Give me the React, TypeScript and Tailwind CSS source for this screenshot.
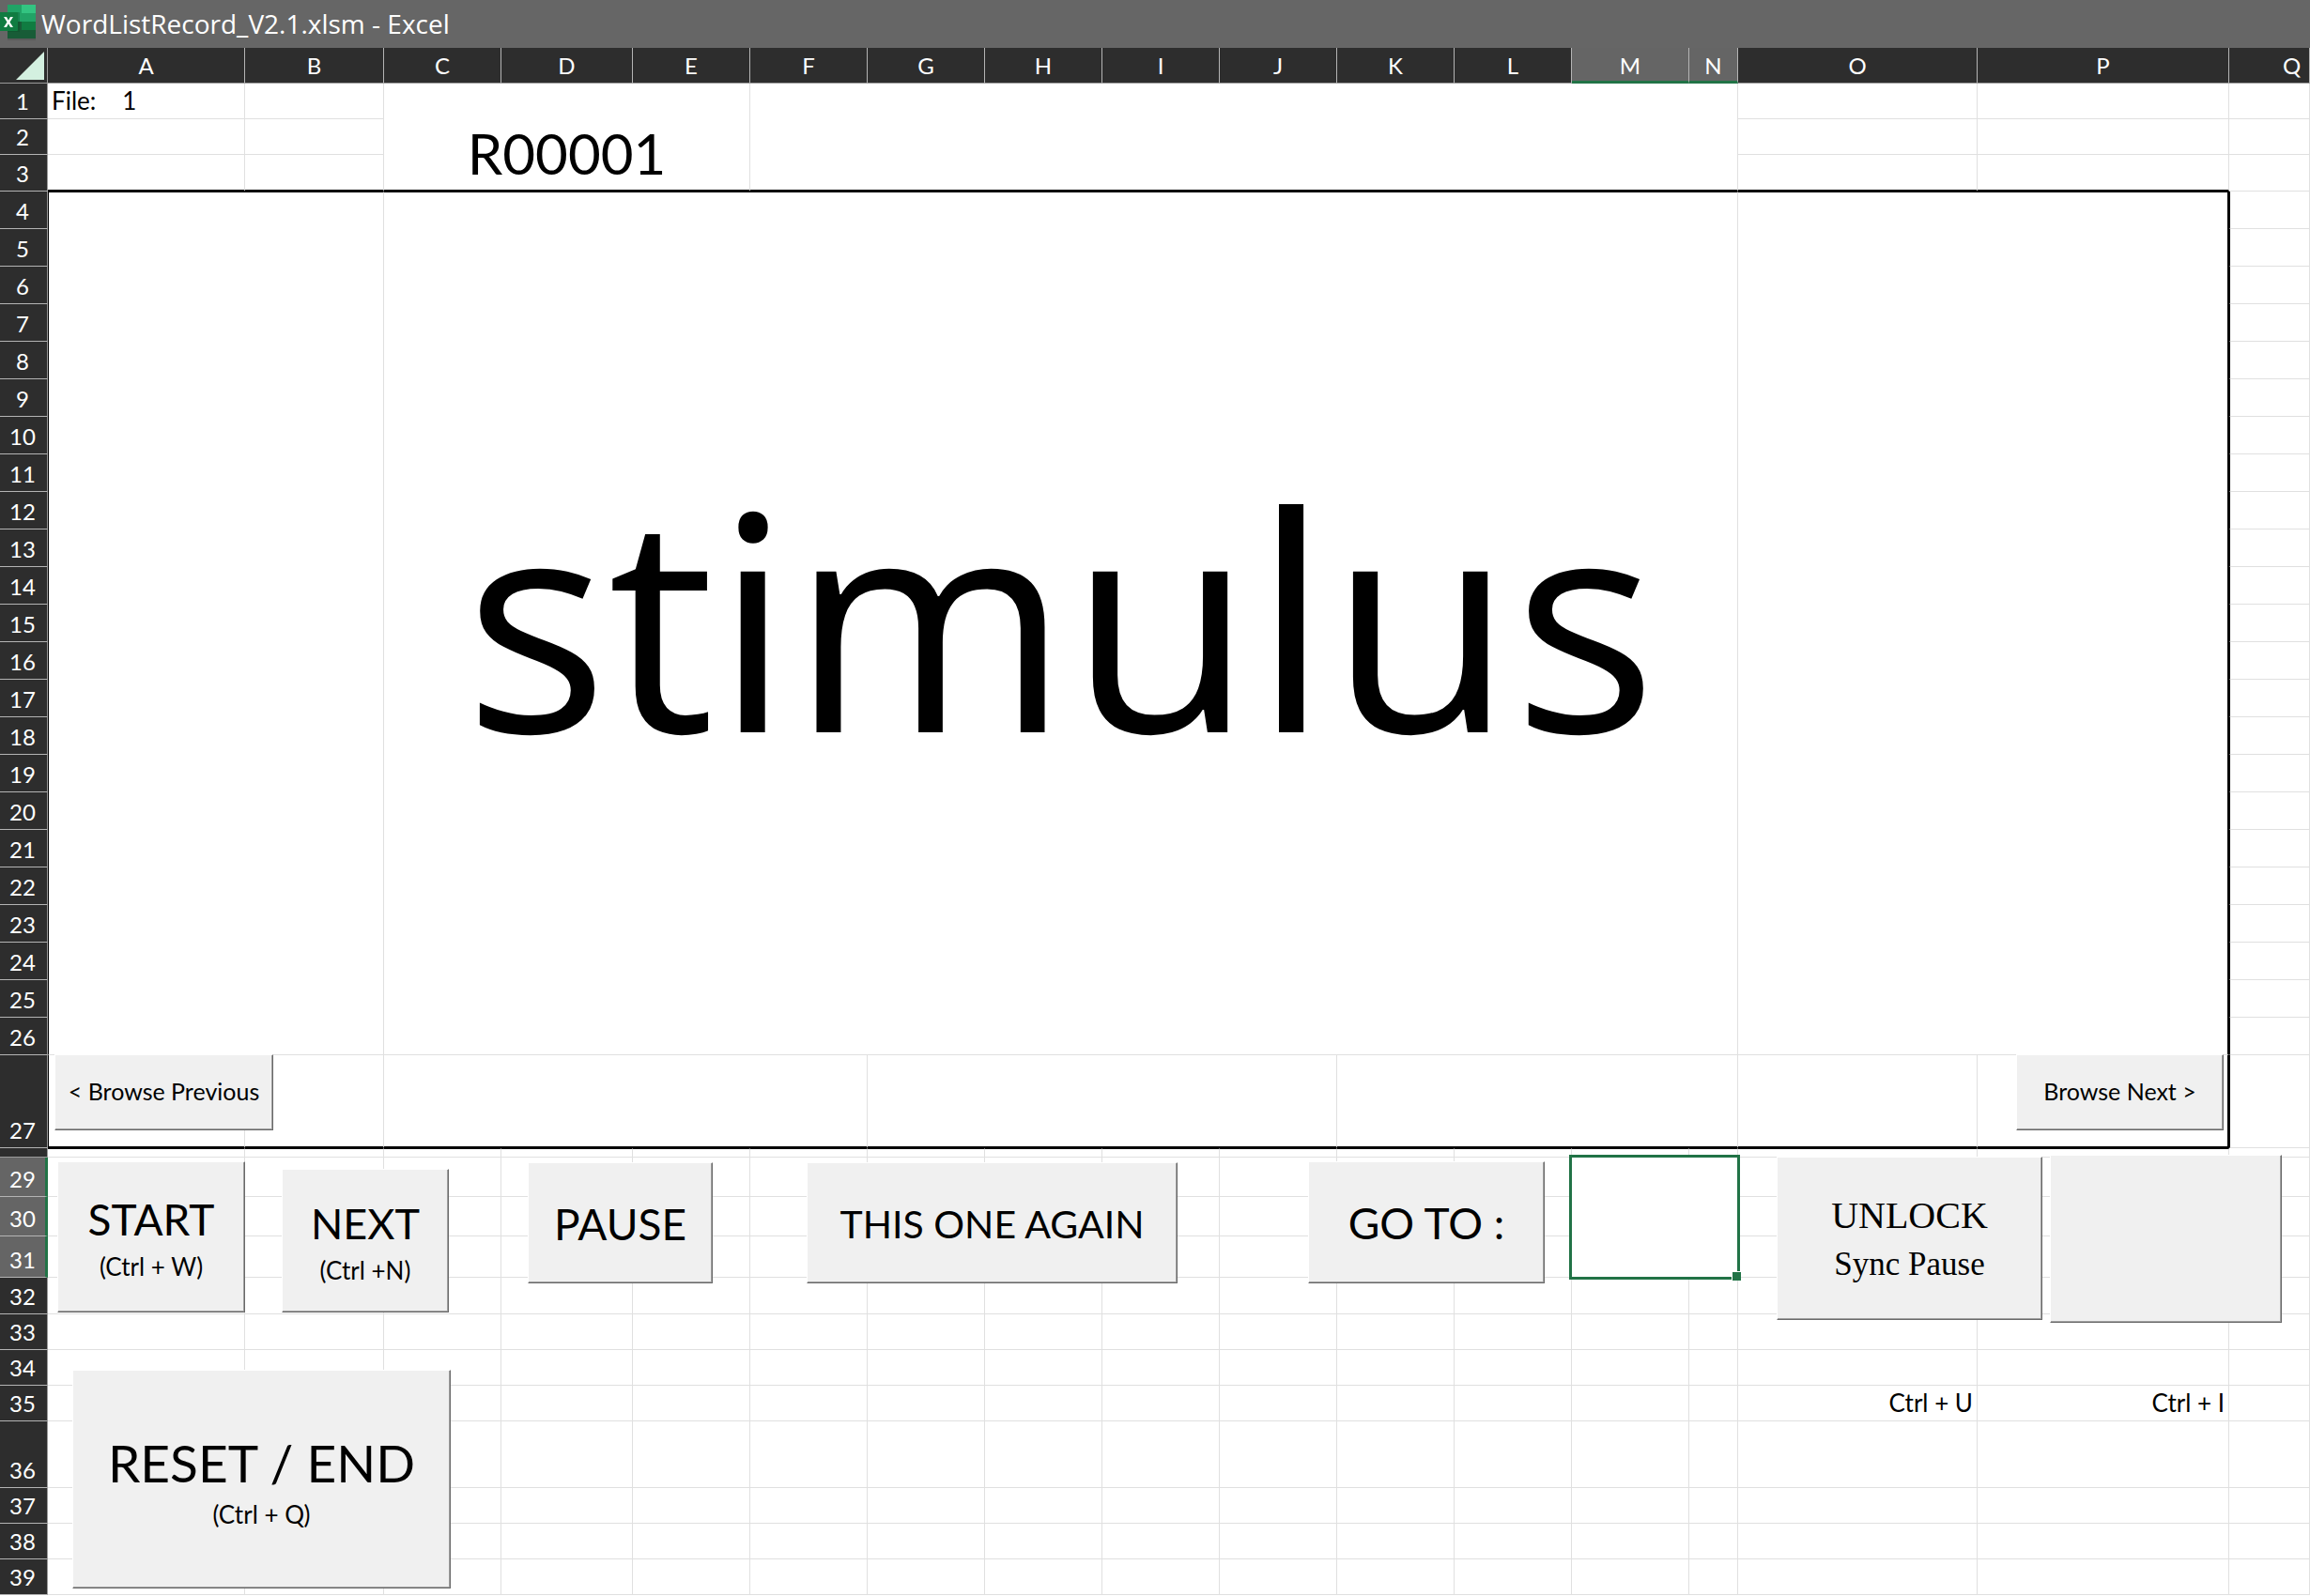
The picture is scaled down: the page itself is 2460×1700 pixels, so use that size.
import type { ReactNode } from "react";

const CELL = "border-r border-b border-[#e0e0e0] p-0";
const FRAME_BOTTOM = "border-r border-b-2 border-r-[#e0e0e0] border-b-black p-0";
const FRAME_SIDE = "border-r border-b border-l border-[#e0e0e0] border-l-black p-0";
const DARK = "bg-[#2d2d2d]";
const LIT = "bg-[#656565]";
const LETTERS = "ABCDEFGHIJKLMNOPQ".split("");

function SheetCells({ count }: { count: number }) {
  return (
    <>
      {Array.from({ length: count }, (_, i) => (
        <td key={i} className={CELL} />
      ))}
    </>
  );
}

function RowHead({ n, lit }: { n: number; lit?: boolean }) {
  return (
    <th
      scope="row"
      className={`border-b border-b-[#b4b4b4] p-0 text-center align-bottom font-normal leading-9 text-white ${
        lit ? `${LIT} border-r-3 border-r-[#217346]` : `${DARK} border-r border-r-[#9a9a9a] pr-0.5`
      }`}
    >
      {n}
    </th>
  );
}

function PushButton({ className, children, label }: { className: string; children?: ReactNode; label?: string }) {
  return (
    <button
      type="button"
      aria-label={label}
      className={`absolute flex flex-col items-center justify-center border border-t-white border-r-[#696969] border-b-[#696969] border-l-white bg-[#f0f0f0] whitespace-nowrap text-black shadow-[inset_-1px_-1px_0_#a0a0a0] ${className}`}
    >
      {children}
    </button>
  );
}

function ExcelLogo() {
  return (
    <svg viewBox="0 0 40 44" className="h-11 w-10 shrink-0" aria-hidden="true">
      <rect x="8" y="6" width="30" height="37" fill="#4f4f4f" opacity=".5" />
      <rect x="8" y="5" width="15" height="18" fill="#21a366" />
      <rect x="23" y="5" width="15" height="9" fill="#33c481" />
      <rect x="23" y="14" width="15" height="9" fill="#21a366" />
      <rect x="8" y="23" width="15" height="9" fill="#185c37" />
      <rect x="23" y="23" width="15" height="9" fill="#107c41" />
      <rect x="8" y="32" width="30" height="9" fill="#185c37" />
      <path d="M8 13h12a1 1 0 0 1 1 1v20H8z" fill="#0b4a27" opacity=".35" />
      <path d="M0 13h18a1 1 0 0 1 1 1v18a1 1 0 0 1-1 1H0z" fill="#107c41" />
      <path d="M4 18h3l2 3.800 2-3.800h3l-3.500 5.500 3.500 5.500h-3l-2-3.800-2 3.800H4l3.500-5.500z" fill="#fff" />
    </svg>
  );
}

function HeaderRow() {
  return (
    <tr className="h-[38px]">
      <th className="border-r border-b border-[#9a9a9a] bg-[#2d2d2d] p-0">
        <svg viewBox="0 0 50 37" className="block h-[37px] w-[50px]" role="img" aria-label="Select all">
          <path d="M47 4v30H17z" fill="#d3f0e0" />
        </svg>
      </th>
      {LETTERS.map((l) => (
        <th
          key={l}
          scope="col"
          className={`border-r border-r-[#b4b4b4] p-0 font-normal text-white ${
            l === "M" || l === "N" ? `${LIT} border-b-3 border-b-[#217346] pt-0.5 leading-[33px]` : `${DARK} border-b border-b-[#9a9a9a] leading-[37px]`
          } ${l === "Q" ? "pl-12" : ""}`}
        >
          {l}
        </th>
      ))}
    </tr>
  );
}

export default function App() {
  const middle = Array.from({ length: 22 }, (_, i) => i + 5);
  return (
    <div className="min-h-screen overflow-hidden bg-white font-['Lato',sans-serif] text-[24px] text-black">
      <header className="flex h-[51px] items-start gap-1 bg-[#666666]">
        <ExcelLogo />
        <h1 className="font-['Open_Sans',sans-serif] text-[28px] leading-[50px] text-white">WordListRecord_V2.1.xlsm - Excel</h1>
      </header>
      <main className="relative">
        <table className="w-full table-fixed border-separate border-spacing-0">
          <colgroup>
            <col className="w-[51px]" />
            <col className="w-[210px]" />
            <col className="w-[148px]" />
            <col className="w-[125px]" />
            <col className="w-[140px]" />
            <col className="w-[125px]" />
            <col className="w-[125px]" />
            <col className="w-[125px]" />
            <col className="w-[125px]" />
            <col className="w-[125px]" />
            <col className="w-[125px]" />
            <col className="w-[125px]" />
            <col className="w-[125px]" />
            <col className="w-[125px]" />
            <col className="w-[52px]" />
            <col className="w-[255px]" />
            <col className="w-[268px]" />
            <col />
          </colgroup>
          <thead>
            <HeaderRow />
          </thead>
          <tbody>
            <tr className="h-[38px]">
              <RowHead n={1} />
              <td className={`${CELL} pl-1 text-[26px] leading-[37px]`}>
                <span className="flex gap-7">
                  <span>File:</span>
                  <span>1</span>
                </span>
              </td>
              <td className={CELL} />
              <td colSpan={3} rowSpan={3} className={`${FRAME_BOTTOM} text-center align-bottom text-[60px] leading-[78px]`}>
                R00001
              </td>
              <td colSpan={9} rowSpan={3} className={FRAME_BOTTOM} />
              <SheetCells count={3} />
            </tr>
            <tr className="h-[38px]">
              <RowHead n={2} />
              <SheetCells count={2} />
              <SheetCells count={3} />
            </tr>
            <tr className="h-[39px]">
              <RowHead n={3} />
              <td className={FRAME_BOTTOM} />
              <td className={FRAME_BOTTOM} />
              <td className={FRAME_BOTTOM} />
              <td className={FRAME_BOTTOM} />
              <td className={CELL} />
            </tr>
            <tr className="h-10">
              <RowHead n={4} />
              <td colSpan={2} rowSpan={23} className="border border-t-black border-r-[#e0e0e0] border-b-[#e0e0e0] border-l-black p-0" />
              <td
                colSpan={12}
                rowSpan={23}
                className="border-t border-r border-b border-[#e0e0e0] border-t-black p-0 pb-4 text-center font-['Open_Sans',sans-serif] text-[320px] leading-[440px]"
              >
                stimulus
              </td>
              <td colSpan={2} rowSpan={23} className="border-t border-r-2 border-b border-black border-b-[#e0e0e0] p-0" />
              <td className={FRAME_SIDE} />
            </tr>
            {middle.map((n) => (
              <tr key={n} className="h-10">
                <RowHead n={n} />
                <td className={FRAME_SIDE} />
              </tr>
            ))}
            <tr className="h-[99px]">
              <RowHead n={27} />
              <td className="border-r border-b-2 border-l border-r-[#e0e0e0] border-b-black border-l-black p-0" />
              <td className={FRAME_BOTTOM} />
              <td colSpan={4} className={FRAME_BOTTOM} />
              <td colSpan={4} className={FRAME_BOTTOM} />
              <td colSpan={4} className={FRAME_BOTTOM} />
              <td className={FRAME_BOTTOM} />
              <td className="border-r-2 border-b-2 border-black p-0" />
              <td className={FRAME_SIDE} />
            </tr>
            <tr className="h-[10px]">
              <td className={`${DARK} border-r border-b border-[#9a9a9a] p-0`} />
              {Array.from({ length: 16 }, (_, i) => (
                <td key={i} className="border-t border-r border-b border-[#e0e0e0] border-t-black p-0" />
              ))}
              <td className={CELL} />
            </tr>
            <tr className="h-[42px]">
              <RowHead n={29} lit />
              <SheetCells count={12} />
              <td colSpan={2} rowSpan={3} className={`${CELL} relative`}>
                <input
                  type="text"
                  aria-label="Go to item"
                  className="absolute -top-[3px] -left-[3px] h-[133px] w-[182px] border-3 border-[#217346] bg-white px-2 text-center text-[48px] outline-none"
                />
                <span className="absolute -right-1 -bottom-1 z-10 size-2.5 border-t border-l border-white bg-[#217346]" />
              </td>
              <SheetCells count={3} />
            </tr>
            <tr className="h-[42px]">
              <RowHead n={30} lit />
              <SheetCells count={12} />
              <SheetCells count={3} />
            </tr>
            <tr className="h-11">
              <RowHead n={31} lit />
              <SheetCells count={12} />
              <SheetCells count={3} />
            </tr>
            <tr className="h-[39px]">
              <RowHead n={32} />
              <SheetCells count={17} />
            </tr>
            <tr className="h-[38px]">
              <RowHead n={33} />
              <SheetCells count={17} />
            </tr>
            <tr className="h-[38px]">
              <RowHead n={34} />
              <SheetCells count={17} />
            </tr>
            <tr className="h-[38px]">
              <RowHead n={35} />
              <SheetCells count={14} />
              <td className={`${CELL} pr-1 text-right text-[26px] leading-[37px]`}>Ctrl + U</td>
              <td className={`${CELL} pr-1 text-right text-[26px] leading-[37px]`}>Ctrl + I</td>
              <td className={CELL} />
            </tr>
            <tr className="h-[71px]">
              <RowHead n={36} />
              <SheetCells count={17} />
            </tr>
            <tr className="h-[38px]">
              <RowHead n={37} />
              <SheetCells count={17} />
            </tr>
            <tr className="h-[38px]">
              <RowHead n={38} />
              <SheetCells count={17} />
            </tr>
            <tr className="h-[38px]">
              <RowHead n={39} />
              <SheetCells count={17} />
            </tr>
          </tbody>
        </table>

        <PushButton className="top-[1072px] left-[58px] h-[81px] w-[233px] pb-0.5 text-[25px]">&lt; Browse Previous</PushButton>
        <PushButton className="top-[1072px] left-[2147px] h-[81px] w-[221px] pb-0.5 text-[25px]">Browse Next &gt;</PushButton>
        <PushButton className="top-[1186px] left-[61px] h-[161px] w-[200px] pt-1.5">
          <span className="text-[46px] leading-[56px]">START</span>
          <span className="text-[26px] leading-[44px]">(Ctrl + W)</span>
        </PushButton>
        <PushButton className="top-[1194px] left-[300px] h-[153px] w-[178px] pt-1.5">
          <span className="text-[45px] leading-[56px]">NEXT</span>
          <span className="text-[26px] leading-[44px]">(Ctrl +N)</span>
        </PushButton>
        <PushButton className="top-[1187px] left-[562px] h-[129px] w-[197px] pt-0.5 text-[46px]">PAUSE</PushButton>
        <PushButton className="top-[1187px] left-[859px] h-[129px] w-[395px] pt-0.5 text-[41px]">THIS ONE AGAIN</PushButton>
        <PushButton className="top-[1186px] left-[1393px] h-[130px] w-[252px] text-[46px]">GO TO :</PushButton>
        <PushButton className="top-[1181px] left-[1892px] h-[174px] w-[283px] pt-0.5 font-['Liberation_Serif',serif]">
          <span className="text-[40px] leading-[54px]">UNLOCK</span>
          <span className="text-[35px] leading-[50px]">Sync Pause</span>
        </PushButton>
        <PushButton label="Sync" className="top-[1179px] left-[2183px] h-[179px] w-[247px]" />
        <PushButton className="top-[1408px] left-[77px] h-[233px] w-[403px] pt-2">
          <span className="text-[55px] leading-[66px]">RESET / END</span>
          <span className="text-[26px] leading-[44px]">(Ctrl + Q)</span>
        </PushButton>
      </main>
    </div>
  );
}
